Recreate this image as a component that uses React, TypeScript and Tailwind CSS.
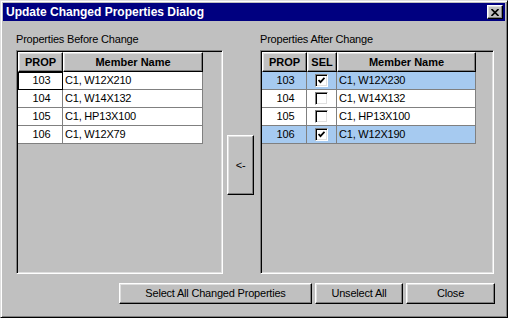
import React from 'react';

type Row = { prop: number; name: string; sel?: boolean };

const BEFORE: Row[] = [
    { prop: 103, name: 'C1, W12X210' },
    { prop: 104, name: 'C1, W14X132' },
    { prop: 105, name: 'C1, HP13X100' },
    { prop: 106, name: 'C1, W12X79' },
];

const AFTER: Row[] = [
    { prop: 103, name: 'C1, W12X230', sel: true },
    { prop: 104, name: 'C1, W14X132', sel: false },
    { prop: 105, name: 'C1, HP13X100', sel: false },
    { prop: 106, name: 'C1, W12X190', sel: true },
];

// classic 3D edges
const raised =
    'border border-t-white border-l-white border-r-black border-b-black shadow-[inset_-1px_-1px_#808080,inset_1px_1px_#dfdfdf]';
const sunken =
    'border border-t-[#808080] border-l-[#808080] border-r-white border-b-white shadow-[inset_1px_1px_#000,inset_-1px_-1px_#dfdfdf]';

const Checkbox: React.FC<{ checked?: boolean }> = ({ checked }) => (
    <span className={`flex h-[13px] w-[13px] items-center justify-center bg-white p-[1px] ${sunken}`}>
        {checked && (
            <svg width="7" height="7" viewBox="0 0 7 7">
                <path d="M0.5 3 L2.5 5.2 L6.5 0.8" fill="none" stroke="#000" strokeWidth="1.8" />
            </svg>
        )}
    </span>
);

const HeaderCell: React.FC<{ w: string; children: React.ReactNode }> = ({ w, children }) => (
    <div className={`${w} flex h-full items-center justify-center text-[11px] font-bold ${raised}`}>
        {children}
    </div>
);

const cell = 'flex h-full items-center border-r border-b border-[#808080]';

const PropTable: React.FC<{ rows: Row[]; withSel?: boolean }> = ({ rows, withSel }) => (
    <div className="flex flex-col">
        <div className="flex h-[20px]">
            <HeaderCell w="w-[45px]">PROP</HeaderCell>
            {withSel && <HeaderCell w="w-[30px]">SEL</HeaderCell>}
            <HeaderCell w={withSel ? 'w-[139px]' : 'w-[140px]'}>Member Name</HeaderCell>
        </div>
        {rows.map((r, i) => {
            const bg = r.sel ? 'bg-[#a6caf0]' : 'bg-white';
            const focus = !withSel && i === 0 ? '[outline:1px_solid_#000] [outline-offset:-1px]' : '';
            return (
                <div key={r.prop} className="flex h-[18px] text-[11px] tracking-[-0.2px]">
                    <div className={`${cell} ${bg} ${focus} w-[45px] justify-center pl-[3px]`}>{r.prop}</div>
                    {withSel && (
                        <div className={`${cell} ${bg} w-[30px] justify-center`}>
                            <Checkbox checked={r.sel} />
                        </div>
                    )}
                    <div className={`${cell} ${bg} ${withSel ? 'w-[139px]' : 'w-[140px]'} pl-[2px]`}>{r.name}</div>
                </div>
            );
        })}
    </div>
);

const Group: React.FC<{ label: string; w: string; children: React.ReactNode }> = ({ label, w, children }) => (
    <div className={`${w} flex flex-col`}>
        <div className="h-[18px] text-[11px] leading-[15px] tracking-[-0.2px]">{label}</div>
        <div className={`h-[224px] p-[1px] ${sunken}`}>{children}</div>
    </div>
);

const Button: React.FC<{ w: string; children: React.ReactNode }> = ({ w, children }) => (
    <button className={`${w} flex h-[21px] items-center justify-center bg-[#c0c0c0] text-[11px] tracking-[-0.2px] ${raised}`}>
        {children}
    </button>
);

const App: React.FC = () => {
    return (
        <div className="h-[318px] w-[508px] overflow-hidden border border-t-[#dfdfdf] border-l-[#dfdfdf] border-r-black border-b-black bg-[#c0c0c0] p-[2px] font-['Liberation_Sans',Arial,sans-serif] text-black shadow-[inset_1px_1px_#fff,inset_-1px_-1px_#808080]">
            {/* Title bar */}
            <div className="flex h-[18px] items-center justify-between bg-[#000080] pl-[3px] pr-[2px]">
                <span className="text-[12px] font-bold leading-[18px] text-white">Update Changed Properties Dialog</span>
                <span className={`flex h-[14px] w-[16px] items-center justify-center bg-[#c0c0c0] ${raised}`}>
                    <svg width="8" height="7" viewBox="0 0 8 7">
                        <path d="M0.5 0 L7.5 7 M7.5 0 L0.5 7" stroke="#000" strokeWidth="1.6" />
                    </svg>
                </span>
            </div>

            <div className="flex items-start pl-[13px] pt-[11px]">
                <Group label="Properties Before Change" w="w-[207px]">
                    <PropTable rows={BEFORE} />
                </Group>

                <div className="ml-[4px] mr-[6px] mt-[103px]">
                    <Button w="w-[27px] !h-[60px]">&lt;-</Button>
                </div>

                <Group label="Properties After Change" w="w-[234px]">
                    <PropTable rows={AFTER} withSel />
                </Group>
            </div>

            <div className="mt-[9px] flex justify-end gap-[3px] pr-[10px]">
                <Button w="w-[193px]">Select All Changed Properties</Button>
                <Button w="w-[88px]">Unselect All</Button>
                <Button w="w-[89px]">Close</Button>
            </div>
        </div>
    );
};

export default App;
